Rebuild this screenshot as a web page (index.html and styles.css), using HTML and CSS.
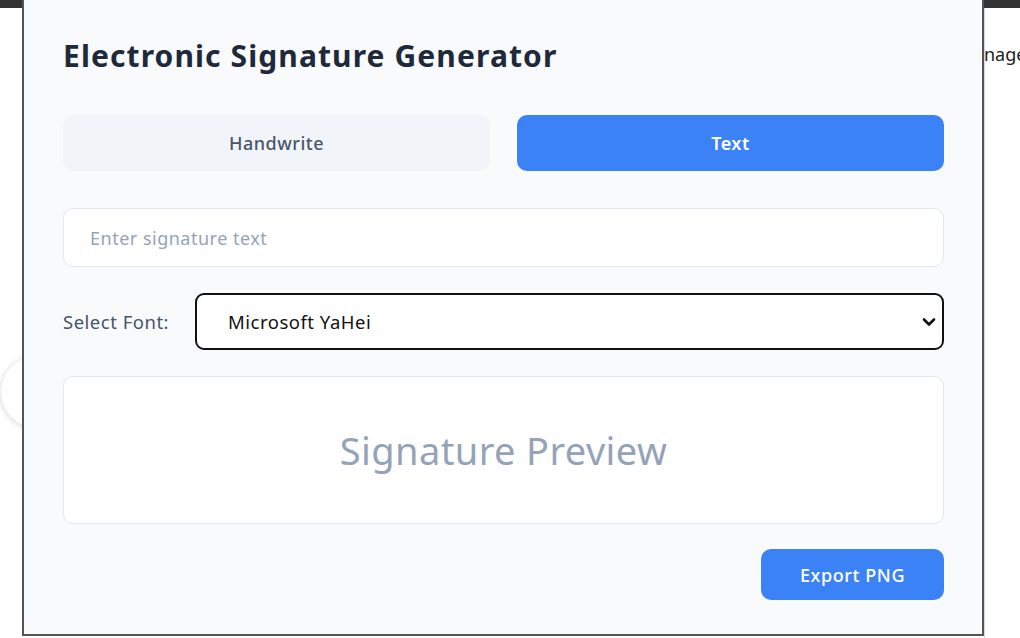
FILE: index.html
```html
<!DOCTYPE html>
<html lang="en">
<head>
<meta charset="utf-8">
<title>Electronic Signature Generator</title>
<link rel="stylesheet" href="styles.css">
</head>
<body>
<div class="page">
  <div class="topbar"></div>
  <div class="left-col">
    <div class="nav-circle"></div>
  </div>
  <div class="right-col">
    <span class="bg-text">nage</span>
  </div>
  <div class="panel">
    <h1 class="title">Electronic Signature Generator</h1>
    <div class="tabs">
      <button class="tab">Handwrite</button>
      <button class="tab tab-active">Text</button>
    </div>
    <input class="sig-input" type="text" placeholder="Enter signature text">
    <div class="font-row">
      <label class="font-label">Select Font:</label>
      <div class="select-wrap">
        <select class="font-select">
          <option>Microsoft YaHei</option>
        </select>
        <svg class="chevron" width="14" height="10" viewBox="0 0 14 10"><path d="M2 2.5 L7 7.5 L12 2.5" fill="none" stroke="#111" stroke-width="2.6" stroke-linecap="round" stroke-linejoin="round"/></svg>
      </div>
    </div>
    <div class="preview">
      <span class="preview-text">Signature Preview</span>
    </div>
    <div class="actions">
      <button class="export-btn">Export PNG</button>
    </div>
  </div>
</div>
</body>
</html>
```

FILE: styles.css
```css
* { box-sizing: border-box; }
html, body { margin: 0; padding: 0; }
body {
  background: #ffffff;
  font-family: "Noto Sans", "Open Sans", sans-serif;
  overflow: hidden;
}
.page {
  display: grid;
  grid-template-columns: 22px 962px 1fr;
  grid-template-rows: 8px 1fr;
  height: 638px;
  width: 1020px;
}
.topbar {
  grid-column: 1 / -1;
  grid-row: 1;
  background: #333333;
}
.left-col {
  grid-column: 1;
  grid-row: 2;
  overflow: hidden;
  padding-top: 348px;
}
.nav-circle {
  width: 72px;
  height: 72px;
  margin-left: 1px;
  border-radius: 50%;
  background: #ffffff;
  box-shadow: 0 1px 6px rgba(0,0,0,0.18);
}
.right-col {
  grid-column: 3;
  grid-row: 2;
  border-left: 1px solid #d9d9d9;
  padding-top: 34px;
  overflow: hidden;
  white-space: nowrap;
}
.bg-text {
  font-size: 18px;
  color: #222;
  margin-left: -1px;
}
.panel {
  grid-column: 2;
  grid-row: 1 / 3;
  z-index: 1;
  margin-bottom: 2px;
  background: #f8fafc;
  border: 2px solid #555555;
  border-top: none;
  padding: 32px 38px 0 39px;
  display: flex;
  flex-direction: column;
}
.title {
  margin: 0;
  font-size: 30px;
  font-weight: 700;
  letter-spacing: 1.1px;
  line-height: 48px;
  color: #1e293b;
}
.tabs {
  display: grid;
  grid-template-columns: 1fr 1fr;
  gap: 27px;
  margin-top: 35px;
}
.tab {
  height: 56px;
  border: none;
  border-radius: 10px;
  background: #f1f5f9;
  color: #475569;
  font-family: inherit;
  font-size: 18px;
  letter-spacing: 0.5px;
  font-weight: 500;
  cursor: pointer;
}
.tab-active {
  background: #3b82f6;
  color: #ffffff;
  font-weight: 600;
}
.sig-input {
  margin-top: 37px;
  height: 59px;
  width: 100%;
  border: 1px solid #e2e8f0;
  border-radius: 10px;
  background: #ffffff;
  padding: 0 26px;
  font-family: inherit;
  font-size: 18px;
  letter-spacing: 0.5px;
  color: #1e293b;
  outline: none;
}
.sig-input::placeholder { color: #94a3b8; }
.font-row {
  display: flex;
  align-items: center;
  gap: 26px;
  margin-top: 26px;
}
.font-label {
  font-size: 18.5px;
  letter-spacing: 0.5px;
  color: #475569;
  white-space: nowrap;
}
.select-wrap {
  position: relative;
  flex: 1;
}
.font-select {
  -webkit-appearance: none;
  appearance: none;
  width: 100%;
  height: 57px;
  border: 2px solid #111111;
  border-radius: 9px;
  background: #ffffff;
  padding: 0 40px 0 31px;
  font-family: inherit;
  font-size: 18.5px;
  letter-spacing: 0.5px;
  color: #111111;
  outline: none;
}
.chevron {
  position: absolute;
  right: 8px;
  top: 24px;
  pointer-events: none;
}
.preview {
  margin-top: 26px;
  height: 148px;
  background: #ffffff;
  border: 1px solid #e2e8f0;
  border-radius: 10px;
  display: flex;
  align-items: center;
  justify-content: center;
}
.preview-text {
  font-size: 38px;
  letter-spacing: 0.4px;
  color: #94a3b8;
}
.actions {
  display: flex;
  justify-content: flex-end;
  margin-top: 25px;
}
.export-btn {
  width: 183px;
  height: 51px;
  border: none;
  border-radius: 10px;
  background: #3b82f6;
  color: #ffffff;
  font-family: inherit;
  font-size: 18px;
  letter-spacing: 0.6px;
  font-weight: 500;
  cursor: pointer;
}
```
